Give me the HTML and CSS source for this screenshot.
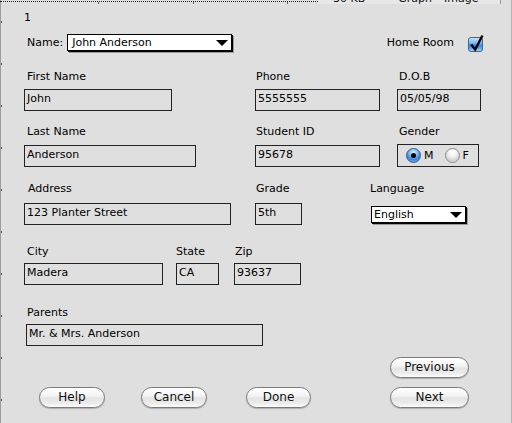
FILE: index.html
```html
<!DOCTYPE html>
<html>
<head>
<meta charset="utf-8">
<title>Student Record</title>
<link rel="stylesheet" href="styles.css">
</head>
<body>
<div class="window">
  <div class="topstrip">
    <div class="dots"><i class="t1"></i><i class="t2"></i><i class="t3"></i></div>
    <div class="colhead"><span class="c1">30 KB</span><span class="c2">Graph</span><span class="c3">Image</span></div>
  </div>
  <div class="form">
    <div class="recno">1</div>
    <div class="namerow">
      <span class="namelbl">Name:</span>
      <div class="select name-select"><span>John Anderson</span><span class="arrow"></span></div>
      <span class="homeroom">Home Room</span>
      <span class="checkbox">
        <svg class="check" width="17" height="20" viewBox="0 0 17 20"><path d="M3.2 10.5 L7.2 15.5 L14.5 1.5" fill="none" stroke="#000" stroke-width="2.4" stroke-linejoin="miter"/></svg>
      </span>
    </div>

    <div class="row r2">
      <div class="grp w-first"><label class="l3">First Name</label><div class="field">John</div></div>
      <div class="grp w-phone"><label class="l1">Phone</label><div class="field">5555555</div></div>
      <div class="grp w-dob"><label class="l2">D.O.B</label><div class="field">05/05/98</div></div>
    </div>

    <div class="row r3">
      <div class="grp w-last"><label class="l3">Last Name</label><div class="field">Anderson</div></div>
      <div class="grp w-sid"><label class="l1">Student ID</label><div class="field">95678</div></div>
      <div class="grp w-gender"><label class="l2">Gender</label>
        <div class="gender">
          <span class="radio on"></span><span class="rlbl">M</span>
          <span class="radio off rf"></span><span class="rlbl">F</span>
        </div>
      </div>
    </div>

    <div class="row r4">
      <div class="grp w-addr"><label class="l4">Address</label><div class="field">123 Planter Street</div></div>
      <div class="grp w-grade"><label class="l1">Grade</label><div class="field">5th</div></div>
      <div class="grp w-lang"><label>Language</label><div class="select lang-select"><span>English</span><span class="arrow"></span></div></div>
    </div>

    <div class="row r5">
      <div class="grp w-city"><label class="l3">City</label><div class="field">Madera</div></div>
      <div class="grp w-state"><label>State</label><div class="field">CA</div></div>
      <div class="grp w-zip"><label class="l1">Zip</label><div class="field">93637</div></div>
    </div>

    <div class="row r6">
      <div class="grp w-parents"><label class="l1">Parents</label><div class="field">Mr. &amp; Mrs. Anderson</div></div>
    </div>

    <div class="btnrow1"><button class="btn b-prev">Previous</button></div>
    <div class="btnrow2">
      <button class="btn b-help">Help</button>
      <button class="btn b-cancel">Cancel</button>
      <button class="btn b-done">Done</button>
      <button class="btn b-next">Next</button>
    </div>
  </div>
</div>
</body>
</html>
```

FILE: styles.css
```css
* { box-sizing: border-box; }

body {
  margin: 0;
  font-family: "DejaVu Sans", "Liberation Sans", sans-serif;
  font-size: 11px;
  color: #000;
}

.window {
  width: 512px;
  height: 423px;
  overflow: hidden;
  background:
    linear-gradient(#9c9c9c, #9c9c9c) 0 0 / 1px 100% no-repeat,
    repeating-linear-gradient(to bottom, transparent 0 21px, #5a5a5a 21px 23px, transparent 23px 42px) 0 0 / 2px 100% no-repeat,
    linear-gradient(#b4b4b4, #b4b4b4) 511px 0 / 1px 100% no-repeat,
    #dfdfdf;
}

/* top strip (partially visible list above) */
.topstrip {
  display: flex;
  height: 4px;
  overflow: hidden;
}
.dots {
  width: 318px;
  height: 3px;
  margin-top: 1px;
  border-top: 1px dotted #222;
  display: flex;
}
.dots i {
  display: block;
  width: 1px;
  height: 2px;
  background: #666;
}
.dots .t1 { margin-left: 98px; }
.dots .t2 { margin-left: 94px; }
.dots .t3 { margin-left: 93px; }

.colhead {
  width: 183px;
  height: 4px;
  display: flex;
  align-items: flex-start;
  background: #e7e7e7;
  border-right: 1px solid #9a9a9a;
  font-size: 11px;
  line-height: 11px;
  color: #111;
  overflow: hidden;
}
.colhead span { margin-top: -7px; white-space: nowrap; }
.colhead .c1 { margin-left: 15px; }
.colhead .c2 { margin-left: 33px; }
.colhead .c3 { margin-left: 12px; }

/* form */
.form { padding-left: 24px; }

.recno {
  margin-top: 7px;
  height: 13px;
  line-height: 13px;
}

.namerow {
  display: flex;
  align-items: flex-start;
  margin-top: 10px;
  height: 17px;
}
.namelbl { margin-left: 3px; line-height: 17px; }

.select {
  height: 17px;
  background: #fff;
  border: 1px solid #000;
  box-shadow: 1px 1px 0 #000, 2px 2px 0 rgba(0, 0, 0, 0.3);
  display: flex;
  align-items: center;
  justify-content: space-between;
  padding: 0 3px 0 4px;
  line-height: 15px;
  white-space: nowrap;
}
.name-select { margin-left: 4px; width: 165px; }
.lang-select { margin-top: 3px; margin-left: 1px; width: 95px; padding-left: 2px; padding-right: 3px; }
.arrow {
  width: 0;
  height: 0;
  border-left: 6px solid transparent;
  border-right: 6px solid transparent;
  border-top: 6px solid #000;
  margin-top: 1px;
}

.homeroom { margin-left: auto; line-height: 17px; }
.checkbox {
  position: relative;
  width: 15px;
  height: 15px;
  margin-top: 3px;
  margin-left: 14px;
  margin-right: 29px;
  border: 1px solid #3b679b;
  border-radius: 3px;
  background: linear-gradient(#c9e4fb 0%, #7bb8ee 40%, #3a8be0 55%, #5fa8ee 80%, #9fd6ff 100%);
}
.check {
  position: absolute;
  left: -1px;
  top: -4px;
}

/* rows */
.row {
  display: flex;
  align-items: flex-start;
}
.grp {
  display: flex;
  flex-direction: column;
  align-items: flex-start;
  gap: var(--g);
}
.grp label {
  display: block;
  height: 13px;
  line-height: 14px;
  white-space: nowrap;
}
.l1 { margin-left: 1px; }
.l2 { margin-left: 2px; }
.l3 { margin-left: 3px; }
.l4 { margin-left: 4px; }

.field {
  width: 100%;
  height: 22px;
  border: 1px solid #222;
  padding: 0 2px;
  line-height: 18px;
  white-space: nowrap;
  overflow: hidden;
}

.r2 { margin-top: 19px; --g: 6px; }
.r3 { margin-top: 14px; --g: 7px; }
.r4 { margin-top: 15px; --g: 8px; }
.r5 { margin-top: 20px; --g: 5px; }
.r6 { margin-top: 21px; --g: 5px; }

.w-first  { width: 148px; }
.w-phone  { width: 125px; margin-left: 83px; }
.w-dob    { width: 84px;  margin-left: 17px; }
.w-last   { width: 172px; }
.w-sid    { width: 125px; margin-left: 59px; }
.w-gender { width: 82px;  margin-left: 17px; }
.w-addr   { width: 207px; }
.w-grade  { width: 47px;  margin-left: 24px; }
.w-lang   { width: 100px; margin-left: 68px; }
.w-city   { width: 139px; }
.w-state  { width: 43px;  margin-left: 13px; }
.w-zip    { width: 67px;  margin-left: 15px; }
.w-parents { width: 237px; margin-left: 2px; }

.gender {
  margin-top: -1px;
  width: 82px;
  height: 23px;
  border: 1px solid #222;
  display: flex;
  align-items: center;
  padding-left: 8px;
}
.radio {
  width: 15px;
  height: 15px;
  border-radius: 50%;
  display: flex;
  align-items: center;
  justify-content: center;
  flex: none;
}
.radio.on {
  border: 1px solid #34598a;
  background: radial-gradient(circle at 50% 28%, #e2f1ff 0, #8cc3f2 30%, #3a86da 62%, #6fb6f5 88%, #a9dcff 100%);
}
.radio.on::after {
  content: "";
  width: 5px;
  height: 5px;
  border-radius: 50%;
  background: #000;
}
.radio.off {
  border: 1px solid #8a8a8a;
  background: radial-gradient(circle at 50% 28%, #ffffff 0, #f2f2f2 35%, #d2d2d2 70%, #eeeeee 100%);
}
.rf { margin-left: 11px; }
.rlbl { margin-left: 3px; line-height: 15px; }

/* buttons */
.btn {
  display: block;
  height: 21px;
  padding: 0;
  margin: 0;
  border: 1px solid #7a7a7a;
  border-radius: 11px;
  background: linear-gradient(#ffffff 0%, #f4f4f4 40%, #e3e3e3 55%, #ececec 80%, #fdfdfd 100%);
  box-shadow: 0 1px 1px rgba(0, 0, 0, 0.22);
  font-family: "DejaVu Sans", "Liberation Sans", sans-serif;
  font-size: 12px;
  line-height: 19px;
  color: #111;
  text-align: center;
}
.btnrow1 { margin-top: 11px; padding-left: 366px; }
.btnrow2 { display: flex; margin-top: 9px; }
.b-prev   { width: 79px; }
.b-help   { width: 66px; margin-left: 15px; }
.b-cancel { width: 66px; margin-left: 36px; }
.b-done   { width: 65px; margin-left: 39px; }
.b-next   { width: 79px; margin-left: 79px; }
```
